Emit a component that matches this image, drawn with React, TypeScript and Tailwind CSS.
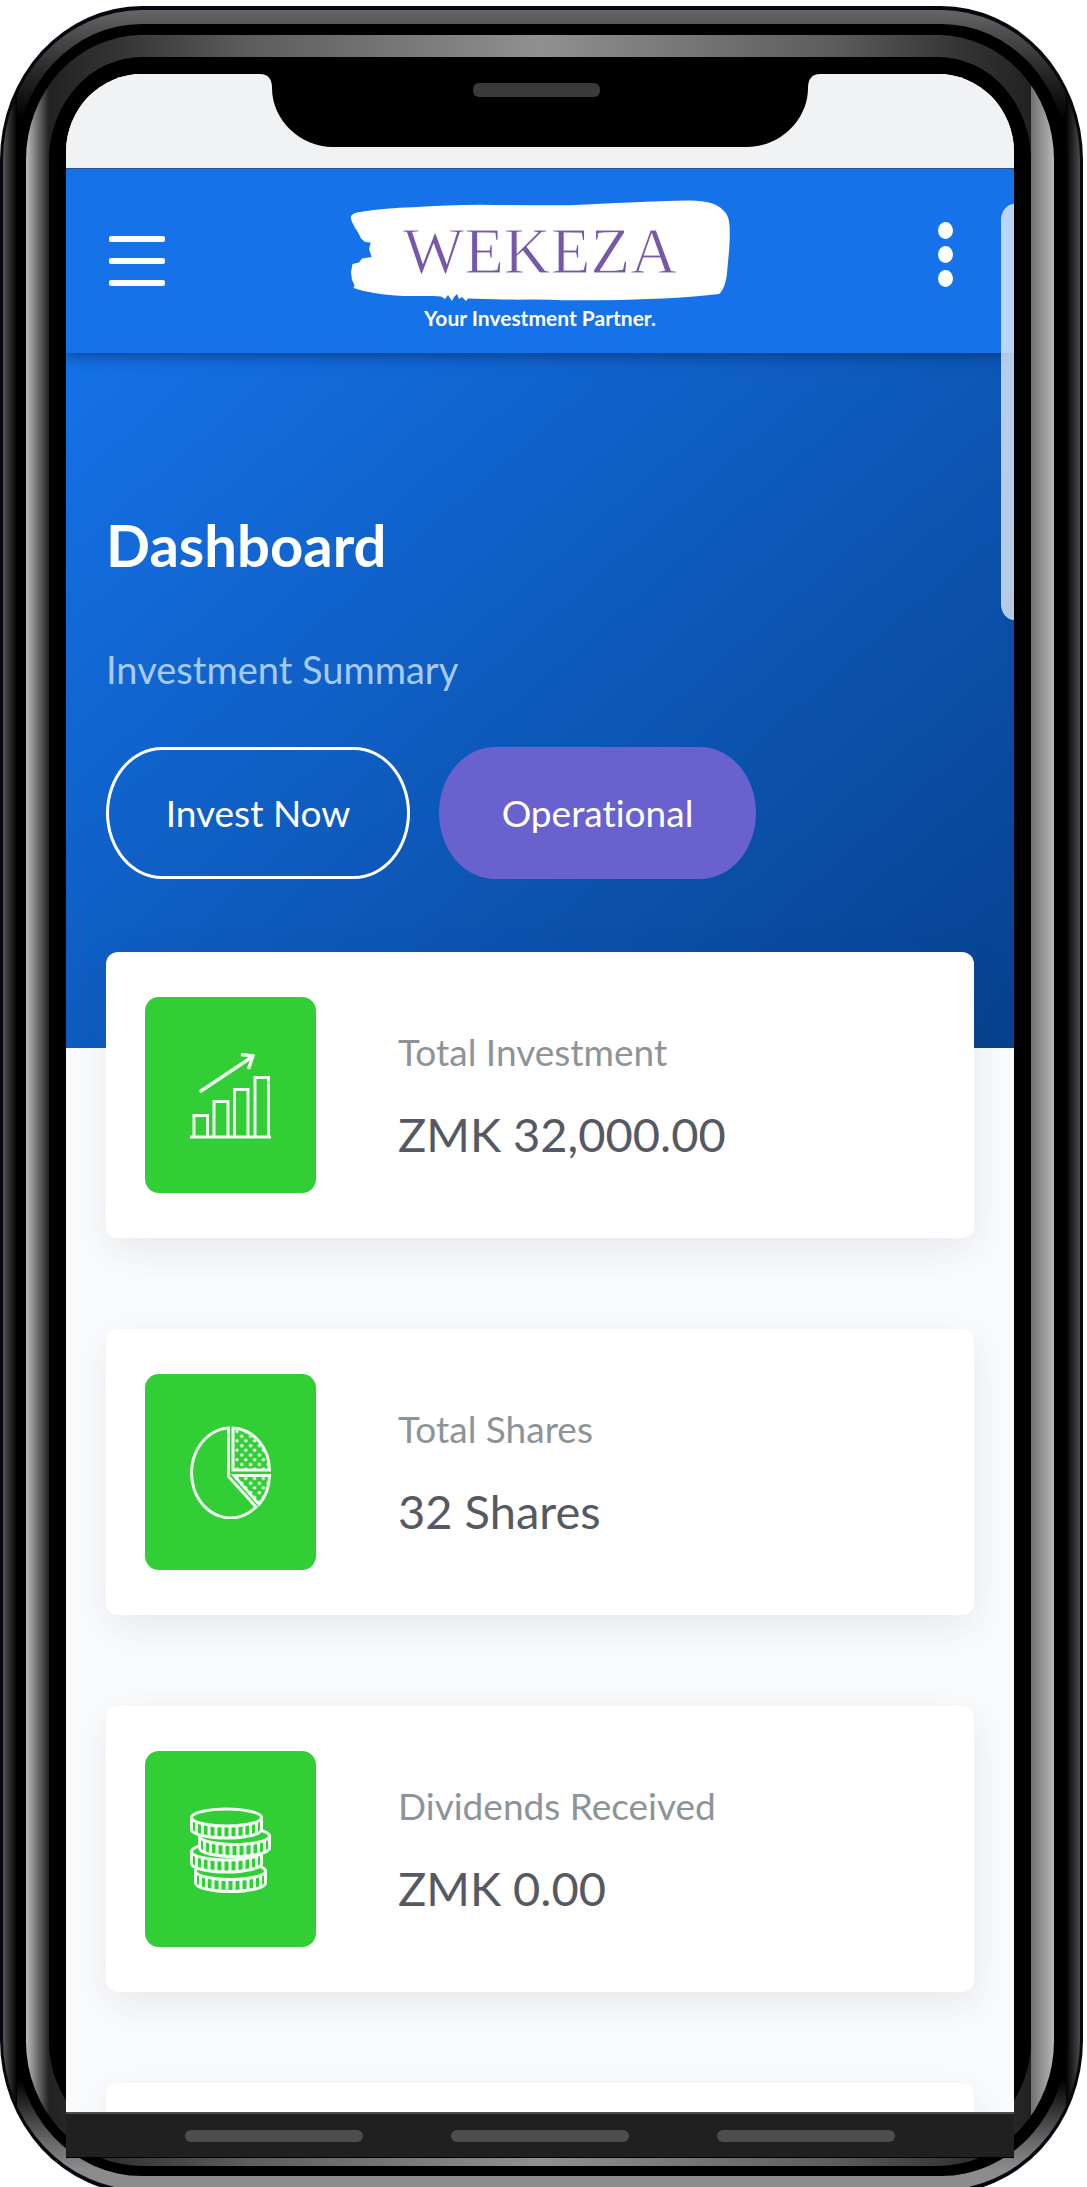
import type { ReactNode } from "react";

function ChartIcon() {
  return (
    <svg viewBox="0 0 82 94" className="h-[94px] w-[82px]" fill="none" stroke="#f1fdf1" strokeWidth="3" aria-hidden="true">
      <path d="M0 89H81" />
      <path d="M4 89V67.5H17.5V89M24 89V53.5H38V89M44.5 89V41.5H58V89M65 89V29.5H78.5V89" />
      <path d="M11 43L62 9" strokeWidth="3.4" strokeLinecap="round" />
      <path d="M51 6.500L63 8L58.500 21" strokeWidth="3.400" />
    </svg>
  );
}

function PieIcon() {
  return (
    <svg viewBox="0 0 82 94" className="h-[94px] w-[82px]" fill="none" stroke="#f1fdf1" strokeWidth="3" aria-hidden="true">
      <defs>
        <pattern id="dots" x="43" y="2" width="8.800" height="9.400" patternUnits="userSpaceOnUse">
          <circle cx="4" cy="4.500" r="1.700" fill="#f1fdf1" stroke="none" />
          <circle cx="0" cy="9.200" r="1.700" fill="#f1fdf1" stroke="none" />
          <circle cx="8.800" cy="9.200" r="1.700" fill="#f1fdf1" stroke="none" />
          <circle cx="0" cy="0" r="1.700" fill="#f1fdf1" stroke="none" />
          <circle cx="8.800" cy="0" r="1.700" fill="#f1fdf1" stroke="none" />
        </pattern>
      </defs>
      <path d="M38.500 3A39 45 0 1 0 66 82L38.500 51.500Z" />
      <path d="M43 3A38 43 0 0 1 79.500 45H43Z" fill="url(#dots)" />
      <path d="M44 50.500H79.500A38 43 0 0 1 69 79.500Z" fill="url(#dots)" />
    </svg>
  );
}

const COINS = [
  { x: 40.5, y: 69 },
  { x: 36.5, y: 49.5 },
  { x: 44.5, y: 34 },
  { x: 36.5, y: 15.5 },
];
const TICKS = [-30, -24, -17.5, -10.5, -3.5, 3.5, 10.5, 17.5, 24, 30];

function CoinsIcon() {
  return (
    <svg viewBox="0 0 82 94" className="h-[94px] w-[82px]" fill="#31ce36" stroke="#f1fdf1" strokeWidth="3" aria-hidden="true">
      {COINS.map(({ x, y }) => (
        <g key={y}>
          <path d={`M${x - 35} ${y}V${y + 12}A35 8.500 0 0 0 ${x + 35} ${y + 12}V${y}Z`} />
          {TICKS.map((t) => {
            const drop = 8.5 * Math.sqrt(1 - (t / 35) ** 2);
            return <path key={t} d={`M${x + t} ${y + drop}v12`} />;
          })}
          <ellipse cx={x} cy={y} rx="35" ry="8.500" />
        </g>
      ))}
    </svg>
  );
}

function Notch() {
  return (
    <div className="absolute inset-x-0 top-0 z-20 flex justify-center" aria-hidden="true">
      <svg viewBox="0 0 560 74" className="h-[74px] w-[560px]">
        <path d="M0 0C8 0 12 5 12 14C12 46 40 73 73 73H487C520 73 548 46 548 14C548 5 552 0 560 0Z" fill="#000" />
        <rect x="213" y="9" width="127" height="14" rx="6" fill="#3a3a3a" />
      </svg>
    </div>
  );
}

function Logo() {
  return (
    <div className="flex flex-col items-center pt-[31px]">
      <div className="relative">
        <svg viewBox="0 0 380 102" className="h-[102px] w-[380px]" fill="#fff" aria-hidden="true">
          <path d="M.7 16.700C3 13 6 12.500 10 12C28 9 45 8 63 7.300C85 5.500 108 5 130 4.700C160 5 190 5.500 220 5.300C262 3.500 300 1 340 .5C357 .5 367 4 373 10C378 15 380 20 379.700 32C380 47 378 60 377 73C376 83 373 91 369 94C350 96 332 98 313 98.500C280 100 247 100.500 213 100.300C193 99 173 100 153 99.500L118 98.500L116 101L112 97L109 99L107 94L104 97L102 101L98 95L95 99L91 96.500C74 95 56 97 40 95C25 93.500 12 91 3.500 88L4.500 85L2 80L1 72L2.500 64L9 62.500L12 58.500L21.700 57L19 49L20.700 42.500L15 42L10.700 38C9 32 1 24 .7 16.700Z" />
        </svg>
        <span className="absolute inset-0 flex items-center justify-center font-['Liberation_Serif',serif] text-[65px] leading-none text-[#7658a8] [-webkit-text-stroke:1px_white]">
          WEKEZA
        </span>
      </div>
      <span className="mt-[2px] text-[21px] leading-7 font-bold">Your Investment Partner.</span>
    </div>
  );
}

function StatCard({ icon, label, value }: { icon: ReactNode; label: string; value: string }) {
  return (
    <article className="flex h-[286px] shrink-0 items-center rounded-[12px] bg-white px-[39px] shadow-[2px_12px_40px_0_rgba(69,65,78,0.10)]">
      <div className="flex h-[196px] w-[171px] shrink-0 items-center justify-center rounded-[14px] bg-[#31ce36]">{icon}</div>
      <div className="ml-[82px] pt-1">
        <p className="text-[37px] leading-[60px] text-[#8d9498]">{label}</p>
        <p className="mt-[14px] text-[47px] leading-[76px] text-[#575962]">{value}</p>
      </div>
    </article>
  );
}

export default function App() {
  return (
    <div className="flex h-screen flex-col overflow-hidden bg-white pt-[6px] pr-[4px] font-['Lato',sans-serif] [font-variant-ligatures:none]">
      {/* Phone body: outer rim, black gap, metal band, inner bezel */}
      <div className="-mb-[7px] flex min-h-0 flex-1 flex-col rounded-[142px/154px] bg-[#07070f] px-[3px] py-[4px]">
        <div className="flex min-h-0 flex-1 flex-col rounded-[139px/150px] bg-[linear-gradient(to_right,#555,#000_14px,transparent_14px,transparent_calc(100%-14px),#000_calc(100%-14px),#4c4c4c),linear-gradient(#666,#555_16px,#2a2a2a_60px,#000_110px,#000_calc(100%-110px),#666_calc(100%-50px),#8c8c8c_calc(100%-20px))] px-[13px] py-[14px]">
          <div className="flex min-h-0 flex-1 flex-col rounded-[126px/136px] bg-black pt-[11px] pr-[13px] pb-[10px] pl-[10px]">
            <div className="flex min-h-0 flex-1 flex-col rounded-[116px/125px] bg-[linear-gradient(to_right,#bcbcbc,#222_23px,#333_90px,#5c5c5c_220px,#909090_50%,#5c5c5c_calc(100%-220px),#333_calc(100%-90px),#222_calc(100%-23px),#707070_calc(100%-23px),#b8b8b8)] px-[23px] py-[22px]">
              <div className="flex min-h-0 flex-1 flex-col rounded-[93px/103px] bg-black px-[17px] pt-[17px]">
                <div className="relative -mb-[14px] flex min-h-0 flex-1 flex-col overflow-hidden rounded-t-[76px_78px] bg-[#f9fbfd]">
                  <div className="relative z-20 h-[94px] shrink-0 bg-[#f1f2f4]" />
                  <Notch />

                  <header className="relative z-10 flex h-[185px] shrink-0 items-start justify-between border-t border-[#29548f] bg-[#1572e8] pr-[61px] pl-[43px] text-white shadow-[0_3px_14px_rgba(10,40,90,0.65)]">
                    <button type="button" aria-label="Open menu" className="mt-[67px] flex flex-col gap-[16px]">
                      <span className="h-[6px] w-[56px] rounded-[2px] bg-white" />
                      <span className="h-[6px] w-[56px] rounded-[2px] bg-white" />
                      <span className="h-[6px] w-[56px] rounded-[2px] bg-white" />
                    </button>
                    <Logo />
                    <button type="button" aria-label="More options" className="mt-[53px] ml-[23px] flex flex-col gap-[7px]">
                      <span className="h-[17px] w-[15px] rounded-[50%] bg-white" />
                      <span className="h-[17px] w-[15px] rounded-[50%] bg-white" />
                      <span className="h-[17px] w-[15px] rounded-[50%] bg-white" />
                    </button>
                  </header>
                  {/* Scroll thumb */}
                  <div className="absolute top-[130px] right-0 z-20 h-[416px] w-[13px] rounded-l-[13px_16px] bg-white/70" />

                  <main className="min-h-0 flex-1 overflow-hidden">
                    <section className="h-[695px] bg-[linear-gradient(139deg,#1572e8,#06418e)] px-[40px] pt-[152px] text-white">
                      <h1 className="text-[58px] leading-[80px] font-bold">Dashboard</h1>
                      <p className="mt-[54px] text-[38px] leading-[60px] text-[#a6cbfa]">Investment Summary</p>
                      <div className="mt-[48px] flex gap-[29px]">
                        <button type="button" className="h-[132px] w-[304px] rounded-[56px/66px] border-[3px] border-white text-[37px]">
                          Invest Now
                        </button>
                        <button type="button" className="h-[132px] w-[317px] rounded-[56px/66px] bg-[#6861ce] text-[37px]">
                          Operational
                        </button>
                      </div>
                    </section>
                    <div className="relative -mt-[96px] flex flex-col gap-[91px] px-[40px]">
                      <StatCard icon={<ChartIcon />} label="Total Investment" value="ZMK 32,000.00" />
                      <StatCard icon={<PieIcon />} label="Total Shares" value="32 Shares" />
                      <StatCard icon={<CoinsIcon />} label="Dividends Received" value="ZMK 0.00" />
                      <div className="h-[286px] rounded-[12px] bg-white shadow-[2px_12px_40px_0_rgba(69,65,78,0.10)]" />
                    </div>
                  </main>

                  <nav aria-label="System" className="relative z-10 flex h-[46px] shrink-0 items-center justify-center gap-[88px] border-t-2 border-b border-t-[#4b4d4f] border-b-black bg-[#202020]">
                    <button type="button" aria-label="Recent apps" className="h-[12px] w-[178px] rounded-full bg-[#4d4d4d]" />
                    <button type="button" aria-label="Home" className="h-[12px] w-[178px] rounded-full bg-[#4d4d4d]" />
                    <button type="button" aria-label="Back" className="h-[12px] w-[178px] rounded-full bg-[#4d4d4d]" />
                  </nav>
                </div>
              </div>
            </div>
          </div>
        </div>
      </div>
    </div>
  );
}
